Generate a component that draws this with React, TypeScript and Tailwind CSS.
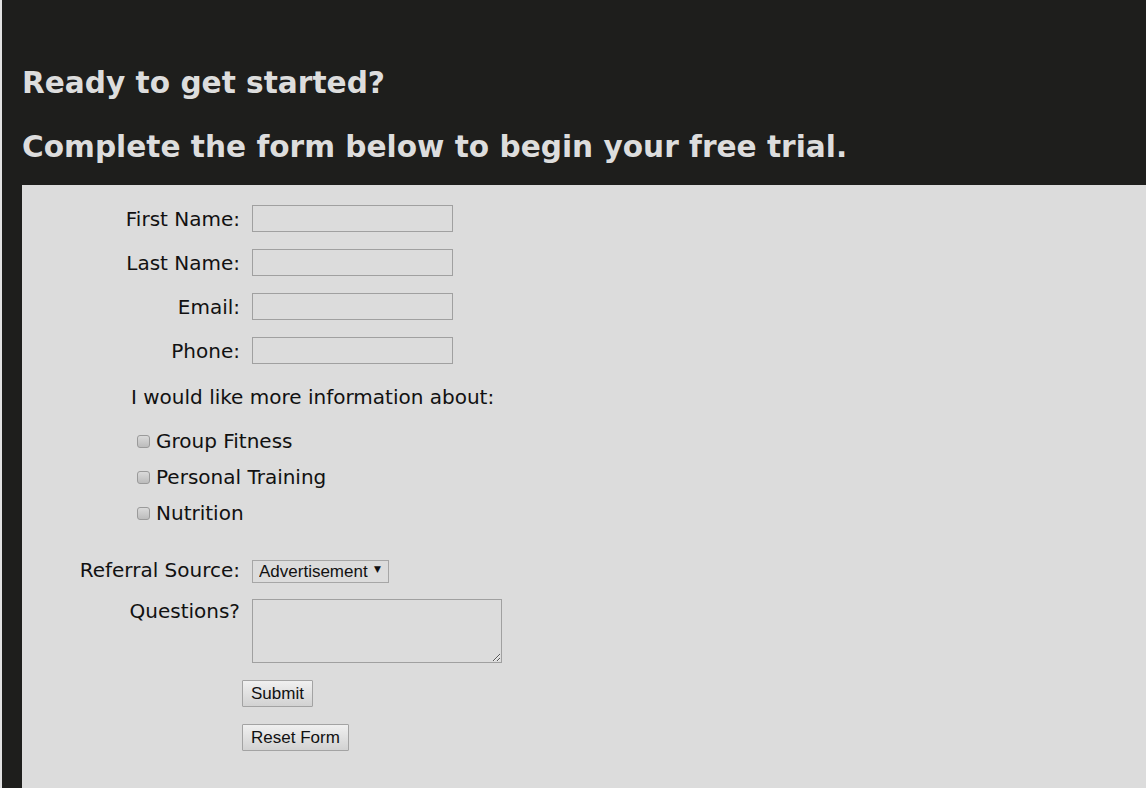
import {useState} from "react";

const fields = [
    {id: "first", label: "First Name:", type: "text"},
    {id: "last", label: "Last Name:", type: "text"},
    {id: "email", label: "Email:", type: "email"},
    {id: "phone", label: "Phone:", type: "tel"},
];

const interests = ["Group Fitness", "Personal Training", "Nutrition"];

const btn = "px-[8px] h-[27px] border border-[#a3a3a3] rounded-[1px] bg-gradient-to-b from-[#f0f0f0] to-[#d2d2d2] text-[17px] text-[#111] font-['Liberation_Sans',Arial,sans-serif] leading-none";

export default function App() {
    const [source, setSource] = useState("Advertisement");

    return (
        <div className="min-h-screen flex flex-col bg-[#1e1e1c] border-l-2 border-[#e2e2e2] font-['DejaVu_Sans',Verdana,sans-serif]">
            <header className="pt-[66px] pl-[20px] text-[#dddddd] font-bold text-[29.6px] leading-[34px]">
                <h2>Ready to get started?</h2>
                <h2 className="mt-[30px]">Complete the form below to begin your free trial.</h2>
            </header>

            <form className="flex-1 mt-[21px] ml-[20px] bg-[#dcdcdc] pt-[20px] pb-10 text-[20px] leading-[24px] text-[#111]">
                <div className="flex flex-col gap-[17px]">
                    {fields.map((f) => (
                        <div key={f.id} className="flex items-center gap-[12px]">
                            <label htmlFor={f.id} className="w-[218px] text-right">{f.label}</label>
                            <input id={f.id} type={f.type}
                                   className="w-[201px] h-[27px] border border-[#a0a0a0] bg-transparent outline-none px-1"/>
                        </div>
                    ))}
                </div>

                <p className="mt-[21px] ml-[109px]">I would like more information about:</p>

                <div className="mt-[20px] ml-[115px] flex flex-col gap-[12px]">
                    {interests.map((name) => (
                        <label key={name} className="flex items-center gap-[6px]">
                            <input type="checkbox"
                                   className="appearance-none w-[13px] h-[13px] border border-[#9a9a9a] rounded-[3px] bg-gradient-to-b from-[#dadada] to-[#bcbcbc] checked:bg-[#888]"/>
                            <span>{name}</span>
                        </label>
                    ))}
                </div>

                <div className="mt-[33px] flex items-center gap-[12px] h-[24px]">
                    <label htmlFor="source" className="w-[218px] text-right">Referral Source:</label>
                    <div className="relative">
                        <select id="source" value={source} onChange={(e) => setSource(e.target.value)}
                                className="appearance-none w-[137px] h-[23px] pl-[6px] border border-[#a6a6a6] bg-transparent text-[17px] leading-none font-['Liberation_Sans',Arial,sans-serif] outline-none">
                            <option>Advertisement</option>
                            <option>Friend</option>
                            <option>Social Media</option>
                            <option>Other</option>
                        </select>
                        <span className="pointer-events-none absolute right-[8px] top-[7px] text-[9px] leading-none font-['DejaVu_Sans',sans-serif]">▼</span>
                    </div>
                </div>

                <div className="mt-[17px] flex items-start gap-[12px]">
                    <label htmlFor="questions" className="w-[218px] text-right">Questions?</label>
                    <textarea id="questions"
                              className="w-[250px] h-[64px] border border-[#a0a0a0] bg-transparent outline-none"/>
                </div>

                <div className="ml-[220px] mt-[17px] flex flex-col items-start gap-[17px]">
                    <button type="submit" className={btn}>Submit</button>
                    <button type="reset" className={btn}>Reset Form</button>
                </div>
            </form>
        </div>
    )
}
